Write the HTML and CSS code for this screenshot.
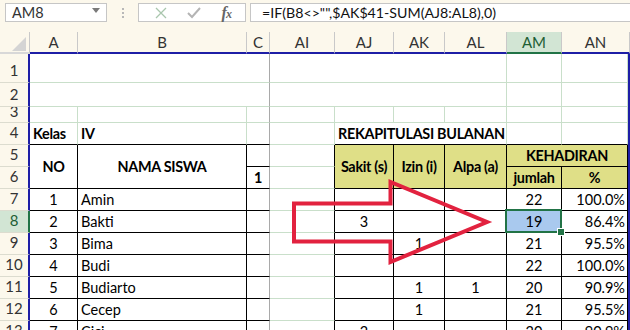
FILE: index.html
```html
<!DOCTYPE html>
<html lang="id">
<head>
    <meta charset="UTF-8">
    <title>Rekap Kehadiran Kelas IV</title>
    <link rel="stylesheet" href="styles.css">
</head>
<body>
    <div class="app">
        <!-- formula bar -->
        <div class="fbar">
            <div class="namebox"><span>AM8</span><span class="caret"></span></div>
            <div class="grip"><span></span><span></span><span></span></div>
            <div class="fxbtns">
                <svg class="ico" width="12" height="12" viewBox="0 0 12 12"><path d="M1 1L11 11M11 1L1 11" stroke="#a9c6ad" stroke-width="1.3" fill="none"/></svg>
                <svg class="ico" width="14" height="12" viewBox="0 0 14 12"><path d="M1 6L5 10L13 1" stroke="#b4b4b4" stroke-width="2" fill="none"/></svg>
                <span class="fx"><i>f</i><i class="x">x</i></span>
            </div>
            <div class="formula">=IF(B8&lt;&gt;"",$AK$41-SUM(AJ8:AL8),0)</div>
        </div>

        <!-- column headers -->
        <div class="colhdr">
            <div class="corner"><span class="tri"></span></div>
            <div>A</div>
            <div>B</div>
            <div>C</div>
            <div>AI</div>
            <div>AJ</div>
            <div>AK</div>
            <div>AL</div>
            <div class="on">AM</div>
            <div>AN</div>
        </div>

        <!-- sheet -->
        <div class="rows">
            <div class="rh">1</div><div class="c s3 sp"></div><div class="c s4"></div><div class="c"></div><div class="c"></div>
            <div class="rh">2</div><div class="c s3 sp"></div><div class="c s4"></div><div class="c"></div><div class="c"></div>
            <div class="rh cut">3</div><div class="c"></div><div class="c"></div><div class="c sp"></div><div class="c"></div><div class="c"></div><div class="c"></div><div class="c"></div><div class="c"></div><div class="c"></div>

            <div class="rh">4</div>
            <div class="c b kb">Kelas</div>
            <div class="c b kb">IV</div>
            <div class="c sp kb"></div>
            <div class="c"></div>
            <div class="c s3 b kb">REKAPITULASI BULANAN</div>
            <div class="c kb"></div>
            <div class="c kb"></div>

            <div class="rh">5</div>
            <div class="c b kr kb mid r2">NO</div>
            <div class="c b kr kb mid r2">NAMA SISWA</div>
            <div class="c sp kb"></div>
            <div class="c kr"></div>
            <div class="c y b kr kb mid r2">Sakit (s)</div>
            <div class="c y b kr kb mid r2">Izin (i)</div>
            <div class="c y b kr kb mid r2">Alpa (a)</div>
            <div class="c y b kr kb mid s2">KEHADIRAN</div>

            <div class="rh">6</div>
            <div class="c sp kb b ctr">1</div>
            <div class="c kr"></div>
            <div class="c y b kr kb ctr">jumlah</div>
            <div class="c y b kr kb ctr">%</div>

            <div class="rh">7</div>
            <div class="c kr kb ctr">1</div><div class="c kr kb">Amin</div><div class="c sp kb"></div><div class="c kr"></div>
            <div class="c kr kb ctr"></div><div class="c kr kb ctr"></div><div class="c kr kb ctr"></div><div class="c kr kb ctr">22</div><div class="c kr kb rt">100.0%</div>

            <div class="rh on">8</div>
            <div class="c kr kb ctr">2</div><div class="c kr kb">Bakti</div><div class="c sp kb"></div><div class="c kr"></div>
            <div class="c kr kb ctr">3</div><div class="c kr kb ctr"></div><div class="c kr kb ctr"></div><div class="c kr kb ctr sel">19</div><div class="c kr kb rt">86.4%</div>

            <div class="rh">9</div>
            <div class="c kr kb ctr">3</div><div class="c kr kb">Bima</div><div class="c sp kb"></div><div class="c kr"></div>
            <div class="c kr kb ctr"></div><div class="c kr kb ctr">1</div><div class="c kr kb ctr"></div><div class="c kr kb ctr">21</div><div class="c kr kb rt">95.5%</div>

            <div class="rh">10</div>
            <div class="c kr kb ctr">4</div><div class="c kr kb">Budi</div><div class="c sp kb"></div><div class="c kr"></div>
            <div class="c kr kb ctr"></div><div class="c kr kb ctr"></div><div class="c kr kb ctr"></div><div class="c kr kb ctr">22</div><div class="c kr kb rt">100.0%</div>

            <div class="rh">11</div>
            <div class="c kr kb ctr">5</div><div class="c kr kb">Budiarto</div><div class="c sp kb"></div><div class="c kr"></div>
            <div class="c kr kb ctr"></div><div class="c kr kb ctr">1</div><div class="c kr kb ctr">1</div><div class="c kr kb ctr">20</div><div class="c kr kb rt">90.9%</div>

            <div class="rh">12</div>
            <div class="c kr kb ctr">6</div><div class="c kr kb">Cecep</div><div class="c sp kb"></div><div class="c kr"></div>
            <div class="c kr kb ctr"></div><div class="c kr kb ctr">1</div><div class="c kr kb ctr"></div><div class="c kr kb ctr">21</div><div class="c kr kb rt">95.5%</div>

            <div class="rh">13</div>
            <div class="c kr kb ctr">7</div><div class="c kr kb">Cici</div><div class="c sp kb"></div><div class="c kr"></div>
            <div class="c kr kb ctr">2</div><div class="c kr kb ctr"></div><div class="c kr kb ctr"></div><div class="c kr kb ctr">20</div><div class="c kr kb rt">90.9%</div>
        </div>

        <!-- annotation arrow -->
        <svg class="arrow" width="630" height="330" viewBox="0 0 630 330">
            <polygon points="294,203.5 390.5,203.5 390.5,182 487,222 390.5,262 390.5,241.5 294,241.5" fill="none" stroke="#e2223f" stroke-width="4" stroke-linejoin="miter"/>
        </svg>
    </div>
</body>
</html>
```

FILE: styles.css
```css
/* base */
* {
    margin: 0;
    padding: 0;
    box-sizing: border-box;
}

body {
    width: 630px;
    height: 330px;
    overflow: hidden;
    background-color: #fff;
    color: #000;
    font-family: Lato, "Noto Sans", sans-serif;
    font-size: 14.5px;
}

.app {
    position: relative;
}

/* formula bar */
.fbar {
    height: 32px;
    display: flex;
    align-items: flex-start;
    padding: 3px 0 0 5px;
    background-color: #fcf8ec;
}

.namebox {
    width: 102px;
    height: 19px;
    display: flex;
    align-items: center;
    justify-content: space-between;
    padding: 0 6px 0 6px;
    background-color: #fff;
    border: 1px solid #c6c6c6;
    color: #333;
}

.caret {
    width: 0;
    height: 0;
    border-left: 4px solid transparent;
    border-right: 4px solid transparent;
    border-top: 5px solid #7a7a7a;
    margin-top: -5px;
}

.grip {
    width: 31px;
    height: 19px;
    display: flex;
    flex-direction: column;
    align-items: center;
    justify-content: center;
    gap: 2px;
}

.grip span {
    width: 2px;
    height: 2px;
    background-color: #b8b8b8;
}

.fxbtns {
    width: 108px;
    height: 19px;
    display: flex;
    align-items: center;
    justify-content: space-around;
    padding: 0 4px 0 6px;
    background-color: #fff;
    border: 1px solid #c6c6c6;
}

.fx {
    font-family: "Liberation Serif", serif;
    font-size: 16px;
    font-weight: bold;
    color: #666;
    letter-spacing: -1px;
}

.fx .x {
    font-size: 12px;
}

.formula {
    flex: 1;
    height: 19px;
    margin-left: 4px;
    padding-left: 11px;
    display: flex;
    align-items: center;
    background-color: #fff;
    border: 1px solid #c6c6c6;
    border-right: none;
    color: #111;
    font-size: 14.2px;
    white-space: nowrap;
}

/* column headers */
.colhdr {
    display: grid;
    grid-template-columns: 30px 48px 169px 23px 65px 59px 51px 62px 55px 68px;
    height: 22px;
    background-color: #fcf8ec;
    font-size: 15px;
}

.colhdr div {
    display: flex;
    align-items: center;
    justify-content: center;
    color: #333;
    border-right: 1px solid #c9c9c9;
    border-bottom: 2px solid #1e1ea6;
}

.colhdr .corner {
    border-bottom-color: #d8d8d8;
}

.colhdr .on {
    background-color: #d2e5d4;
    color: #1e5e34;
    border-bottom-color: #217346;
}

.tri {
    width: 0;
    height: 0;
    border-left: 14px solid transparent;
    border-bottom: 14px solid #d4d4d4;
    margin: 4px 0 0 8px;
}

/* sheet body */
.rows {
    display: grid;
    grid-template-columns: 30px 48px 169px 23px 65px 59px 51px 62px 55px 66px;
    grid-template-rows: 29px 24px 16px repeat(10, 22px);
    border-right: 2px solid #1e1ea6;
}

.rh {
    display: flex;
    align-items: flex-end;
    justify-content: center;
    padding-bottom: 3px;
    overflow: hidden;
    background-color: #fcf8ec;
    color: #333;
    font-size: 15px;
    border-right: 2px solid #1e1ea6;
    border-bottom: 1px solid #dcdccf;
}

.rh.cut {
    line-height: 14px;
    padding-bottom: 4px;
}

.rh.on {
    background-color: #d2e5d4;
    color: #1e5e34;
    border-right-color: #217346;
}

.c {
    display: flex;
    align-items: flex-end;
    padding: 0 3px 2px 3px;
    white-space: nowrap;
    border-right: 1px solid #c9dfca;
    border-bottom: 1px solid #c9dfca;
}

.s2 { grid-column: span 2; }
.s3 { grid-column: span 3; }
.s4 { grid-column: span 4; }
.r2 { grid-row: span 2; }

.b {
    font-weight: bold;
    font-size: 14.4px;
    letter-spacing: -0.3px;
}

.ctr { justify-content: center; }
.rt { justify-content: flex-end; padding-right: 2px; }
.mid { align-items: center; justify-content: center; padding-bottom: 0; }

.y { background-color: #dfdf87; }

.kr { border-right-color: #000; }
.kb { border-bottom-color: #000; }
.sp { border-right-color: #a9a9a9; }

/* active cell */
.sel {
    position: relative;
    background-color: #a9c9ee;
}

.sel::after {
    content: "";
    position: absolute;
    left: -2px;
    top: -2px;
    right: -1px;
    bottom: -1px;
    border: 2px solid #217346;
}

.sel::before {
    content: "";
    position: absolute;
    right: -4px;
    bottom: -4px;
    width: 6px;
    height: 6px;
    background-color: #217346;
    border: 1px solid #fff;
    z-index: 1;
}

/* annotation */
.arrow {
    position: absolute;
    left: 0;
    top: 0;
    pointer-events: none;
}
```
